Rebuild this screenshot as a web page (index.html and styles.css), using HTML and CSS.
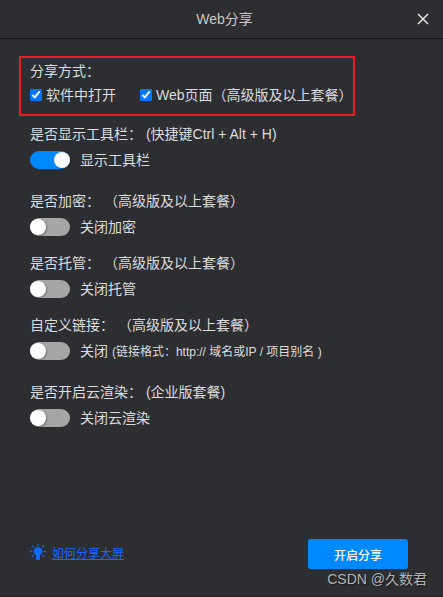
FILE: index.html
```html
<!DOCTYPE html>
<html lang="zh-CN">
<head>
    <meta charset="UTF-8">
    <meta name="viewport" content="width=device-width, initial-scale=1.0">
    <title>Web分享</title>
    <link rel="stylesheet" href="styles.css">
</head>
<body>
    <div class="dialog">
        <header class="dialog-header">
            <h1>Web分享</h1>
            <button type="button" class="close" aria-label="关闭">
                <svg width="12" height="12" viewBox="0 0 12 12">
                    <path d="M1 1L11 11M11 1L1 11" stroke="#e4e4e4" stroke-width="1.5" fill="none"/>
                </svg>
            </button>
        </header>

        <main class="dialog-body">
            <section class="group share-mode">
                <h2>分享方式：</h2>
                <div class="checks">
                    <label class="check"><input type="checkbox" checked>软件中打开</label>
                    <label class="check"><input type="checkbox" checked>Web页面（高级版及以上套餐）</label>
                </div>
            </section>

            <section class="group">
                <h2>是否显示工具栏： (快捷键Ctrl + Alt + H)</h2>
                <label class="row">
                    <input type="checkbox" class="switch" checked>
                    <span>显示工具栏</span>
                </label>
            </section>

            <section class="group spaced">
                <h2>是否加密： （高级版及以上套餐）</h2>
                <label class="row">
                    <input type="checkbox" class="switch">
                    <span>关闭加密</span>
                </label>
            </section>

            <section class="group">
                <h2>是否托管： （高级版及以上套餐）</h2>
                <label class="row">
                    <input type="checkbox" class="switch">
                    <span>关闭托管</span>
                </label>
            </section>

            <section class="group">
                <h2>自定义链接： （高级版及以上套餐）</h2>
                <label class="row">
                    <input type="checkbox" class="switch">
                    <span>关闭 <small>(链接格式：http:// 域名或IP / 项目别名 )</small></span>
                </label>
            </section>

            <section class="group spaced">
                <h2>是否开启云渲染： (企业版套餐)</h2>
                <label class="row">
                    <input type="checkbox" class="switch">
                    <span>关闭云渲染</span>
                </label>
            </section>
        </main>

        <footer class="dialog-footer">
            <a href="#help" class="help">
                <svg width="16" height="20" viewBox="0 0 16 20">
                    <path d="M8 3a4.300 4.300 0 0 0-4.300 4.300c0 1.900 1.100 2.900 2.300 3.700V15a1 1 0 0 0 1 1h2a1 1 0 0 0 1-1v-4c1.200-.8 2.300-1.800 2.300-3.700A4.300 4.300 0 0 0 8 3z" fill="#0f6bff"/>
                    <path d="M8 0v1.800M2 1.500l1.700 1.700M14 1.500l-1.700 1.700M0 7.500h2.500M13.500 7.500H16M2 12.800l1.700-1.700M14 12.800l-1.700-1.700" stroke="#2260e8" stroke-width="1.400" fill="none"/>
                </svg>
                <span>如何分享大屏</span>
            </a>
            <button type="button" class="submit">开启分享</button>
        </footer>

        <div class="watermark">CSDN @久数君</div>
    </div>
</body>
</html>
```

FILE: styles.css
```css
* {
    box-sizing: border-box;
}

body {
    margin: 0;
    background: #2d2e32;
    color: #dcdcdc;
    font-family: "Liberation Sans", Arial, "Noto Sans CJK SC", sans-serif;
    font-size: 14px;
    line-height: 24px;
}

.dialog {
    position: relative;
    display: flex;
    flex-direction: column;
    min-height: 100vh;
    border-bottom: 1px solid #222326;
}

.dialog-header {
    display: grid;
    grid-template-columns: 1fr auto 1fr;
    align-items: center;
    height: 39px;
    padding: 0 14px 0 20px;
    border-bottom: 1px solid #18191c;
}

h1,
h2 {
    margin: 0;
    font-size: 14px;
    font-weight: normal;
}

h1 {
    grid-column: 2;
    color: #c8c8c8;
}

.close {
    display: flex;
    justify-self: end;
    padding: 0;
    background: none;
    border: none;
    cursor: pointer;
}

.dialog-body {
    padding: 17px 19px 20px;
}

.group {
    padding: 0 11px;
    margin-bottom: 10px;
}

.spaced {
    margin-top: 15px;
}

.share-mode {
    width: fit-content;
    padding: 1px 0 7px 9px;
    margin-bottom: 6px;
    border: 2px solid #ed1c24;
}

.checks {
    display: flex;
    gap: 24px;
}

.check {
    display: flex;
    align-items: center;
    gap: 4px;
}

.check input {
    width: 12px;
    height: 12px;
    margin: 0;
}

.row {
    display: flex;
    align-items: center;
    gap: 10px;
    height: 28px;
}

.row small {
    font-size: 12px;
}

.switch {
    appearance: none;
    display: flex;
    width: 40px;
    height: 18px;
    margin: 0;
    border-radius: 9px;
    background: #a6a6a6;
    align-items: center;
    cursor: pointer;
}

.switch::before {
    content: "";
    width: 16px;
    height: 16px;
    border-radius: 50%;
    background: #fff;
    box-shadow: 1px 1px 2px rgba(0,0,0,0.3);
}

.switch:checked {
    justify-content: flex-end;
    background: #0089ff;
}

.dialog-footer {
    display: flex;
    justify-content: space-between;
    align-items: center;
    padding: 0 35px 27px 30px;
    margin-top: auto;
}

.help {
    display: flex;
    align-items: center;
    gap: 6px;
    color: #1668ff;
    font-size: 12px;
    text-decoration: none;
}

.help span {
    text-decoration: underline;
}

.submit {
    width: 100px;
    height: 30px;
    padding: 0;
    background: #0089ff;
    color: white;
    border: none;
    border-radius: 3px;
    font-family: inherit;
    font-size: 12px;
    font-weight: 500;
    cursor: pointer;
}

.watermark {
    position: absolute;
    right: 16px;
    bottom: 5px;
    color: #b4b4b4;
    font-size: 14px;
    text-shadow: 1px 1px 1px rgba(0,0,0,0.5);
}
```
